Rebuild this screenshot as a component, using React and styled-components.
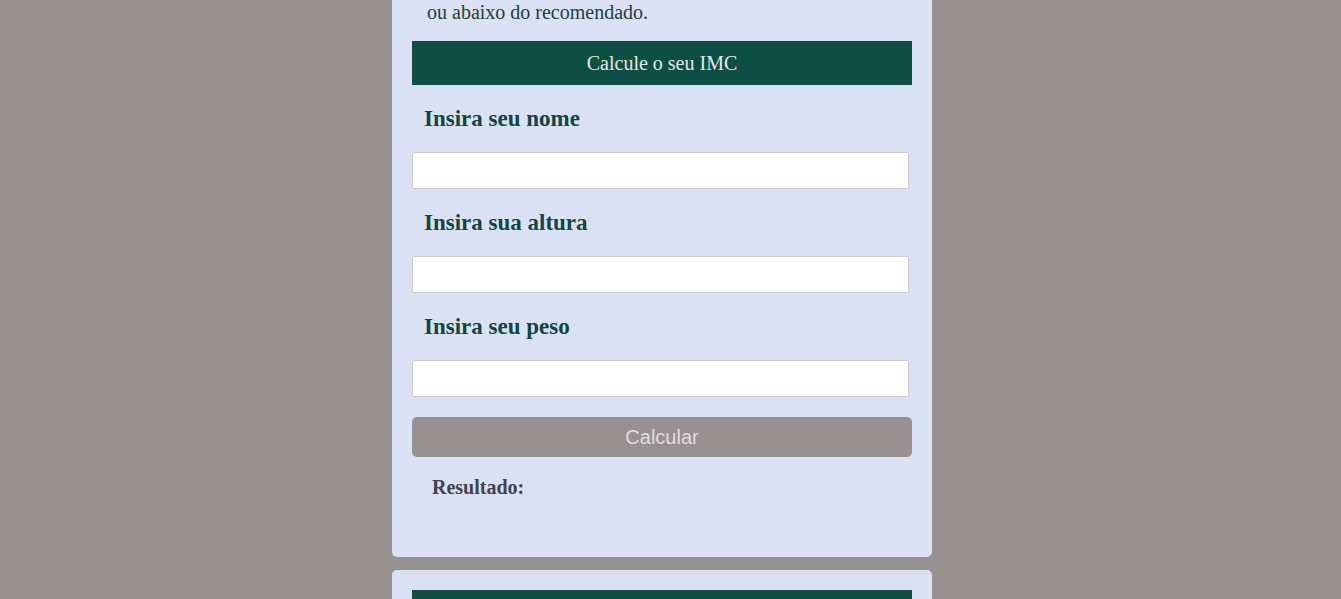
import React from "react";
import styled, { createGlobalStyle } from "styled-components";

const Global = createGlobalStyle`
  html, body { margin: 0; padding: 0; }
  body {
    background: #979191;
    font-family: "Liberation Serif", "Times New Roman", serif;
    font-size: 20px;
    overflow: hidden;
    padding-right: 17px;
  }
`;

const Page = styled.main`
  width: 540px;
  margin: 0 auto;
  display: flex;
  flex-direction: column;
  gap: 13px;
`;

const Card = styled.section`
  background: #dbe1f5;
  border-radius: ${(p) => (p.$cutTop ? "0 0 5px 5px" : "5px")};
  padding: ${(p) => (p.$cutTop ? "0 20px 58px" : "20px 20px 40px")};
  display: flex;
  flex-direction: column;
`;

const Intro = styled.p`
  margin: 0;
  padding: 2px 0 0 15px;
  font-size: 20px;
  line-height: 21px;
  color: #1d3f3a;
`;

const Banner = styled.h2`
  margin: ${(p) => (p.$first ? "18px 0 0" : "0")};
  height: 44px;
  background: #0e4f45;
  color: #e6e6e6;
  font-size: 20px;
  font-weight: normal;
  display: flex;
  align-items: center;
  justify-content: center;
`;

const Label = styled.label`
  display: block;
  margin: 21px 0 20px;
  padding-left: 12px;
  font-size: 23px;
  line-height: 26px;
  font-weight: bold;
  color: #104741;
`;

const Input = styled.input`
  box-sizing: border-box;
  width: 497px;
  height: 37px;
  border: 1px solid #cccccc;
  border-radius: 2px;
  background: #fff;
  margin: 0;
  padding: 0 8px;
`;

const Button = styled.button`
  margin-top: 20px;
  height: 40px;
  width: 100%;
  border: none;
  border-radius: 5px;
  background: #979191;
  color: #dedede;
  font-family: "Liberation Sans", Arial, sans-serif;
  font-size: 20px;
`;

const Result = styled.p`
  margin: 19px 0 0;
  padding-left: 20px;
  font-size: 20px;
  line-height: 23px;
  font-weight: bold;
  color: #444150;
`;

const fields = [
  { id: "nome", label: "Insira seu nome" },
  { id: "altura", label: "Insira sua altura" },
  { id: "peso", label: "Insira seu peso" },
];

export default function App() {
  return (
    <>
      <Global />
      <Page>
        <Card $cutTop>
          <Intro>ou abaixo do recomendado.</Intro>
          <Banner $first>Calcule o seu IMC</Banner>
          {fields.map((f) => (
            <React.Fragment key={f.id}>
              <Label htmlFor={f.id}>{f.label}</Label>
              <Input id={f.id} type="text" />
            </React.Fragment>
          ))}
          <Button type="button">Calcular</Button>
          <Result>Resultado:</Result>
        </Card>
        <Card>
          <Banner>&nbsp;</Banner>
        </Card>
      </Page>
    </>
  );
}
